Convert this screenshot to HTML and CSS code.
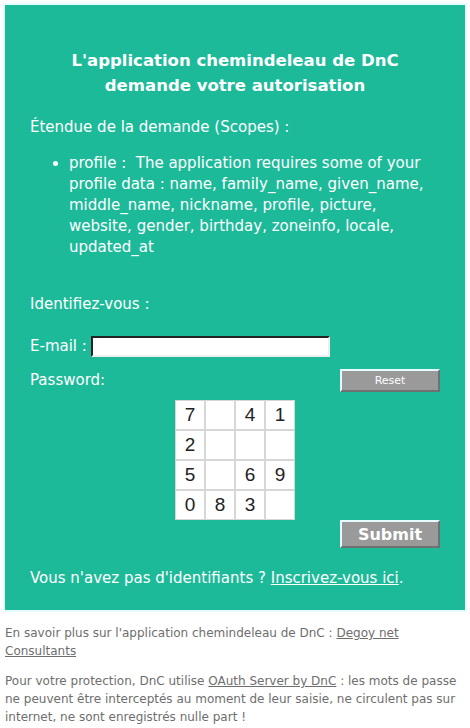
FILE: index.html
```html
<!DOCTYPE html>
<html lang="fr">
<head>
<meta charset="utf-8">
<title>Autorisation</title>
<link rel="stylesheet" href="styles.css">
</head>
<body>
<div class="panel">
  <h1 class="title">L'application chemindeleau de DnC<br>demande votre autorisation</h1>
  <p class="scope-label">Étendue de la demande (Scopes) :</p>
  <ul class="scopes">
    <li>profile :&nbsp; The application requires some of your profile data : name, family_name, given_name, middle_name, nickname, profile, picture, website, gender, birthday, zoneinfo, locale, updated_at</li>
  </ul>
  <p class="ident">Identifiez-vous :</p>
  <div class="row email-row">
    <label class="lbl">E-mail :</label>
    <input class="email" type="text">
  </div>
  <div class="row pw-row">
    <span class="lbl">Password:</span>
    <button class="btn reset">Reset</button>
  </div>
  <div class="pad">
    <span>7</span><span></span><span>4</span><span>1</span>
    <span>2</span><span></span><span></span><span></span>
    <span>5</span><span></span><span>6</span><span>9</span>
    <span>0</span><span>8</span><span>3</span><span></span>
  </div>
  <div class="submit-row"><button class="btn submit">Submit</button></div>
  <p class="signup">Vous n'avez pas d'identifiants ? <a href="#">Inscrivez-vous ici</a>.</p>
</div>
<div class="footer">
  <p>En savoir plus sur l'application chemindeleau de DnC : <a href="#">Degoy net Consultants</a></p>
  <p>Pour votre protection, DnC utilise <a href="#">OAuth Server by DnC</a> : les mots de passe ne peuvent être interceptés au moment de leur saisie, ne circulent pas sur internet, ne sont enregistrés nulle part !</p>
</div>
</body>
</html>
```
FILE: styles.css
```css
html, body {
  margin: 0;
  padding: 0;
  background: #ffffff;
}
body {
  font-family: "DejaVu Sans", "Open Sans", sans-serif;
  width: 470px;
  padding-top: 5px;
}
.panel {
  margin: 0 5px;
  background: #1dba9a;
  color: #ffffff;
  padding: 43px 25px 21px 25px;
  font-size: 15px;
  line-height: 21px;
  box-shadow: 0 0 0 2px #e6fbfb;
}
.title {
  margin: 0;
  font-size: 16.5px;
  line-height: 25px;
  font-weight: bold;
  text-align: center;
}
.scope-label {
  margin: 19px 0 0 0;
}
.scopes {
  margin: 15px 0 0 0;
  padding-left: 39px;
}
.ident {
  margin: 36px 0 0 0;
}
.row {
  display: flex;
  align-items: center;
}
.email-row {
  margin-top: 20px;
  height: 22px;
}
.lbl {
  margin-right: 4px;
}
.email {
  width: 235px;
  height: 17px;
  padding: 0;
  border: 2px inset #777;
  border-right-color: #eee;
  border-bottom-color: #eee;
  background: #fff;
  box-sizing: content-box;
}
.pw-row {
  margin-top: 11px;
  height: 24px;
  justify-content: space-between;
}
.btn {
  background: #9a9a9a;
  color: #ffffff;
  font-family: inherit;
  border: 2px solid;
  border-color: #e8fbff #707070 #707070 #e8fbff;
  padding: 0;
  width: 100px;
  cursor: pointer;
}
.reset {
  font-size: 11px;
  height: 23px;
}
.pad {
  margin: 8px auto 0 auto;
  width: 120px;
  display: grid;
  grid-template-columns: repeat(4, 30px);
  grid-auto-rows: 30px;
  background: #ffffff;
}
.pad span {
  border: 1px solid #d6d6d6;
  background: #ffffff;
  color: #222;
  font-family: "Liberation Sans", Arial, sans-serif;
  font-size: 19px;
  line-height: 28px;
  text-align: center;
}
.submit-row {
  display: flex;
  justify-content: flex-end;
}
.submit {
  font-size: 16px;
  font-weight: bold;
  height: 28px;
}
.signup {
  margin: 20px 0 0 0;
}
.signup a {
  color: #ffffff;
}
.footer {
  padding: 14px 5px 0 5px;
  color: #6e6e6e;
  font-size: 12px;
  line-height: 18px;
}
.footer p {
  margin: 0 0 12px 0;
}
.footer a {
  color: #6e6e6e;
}
```
